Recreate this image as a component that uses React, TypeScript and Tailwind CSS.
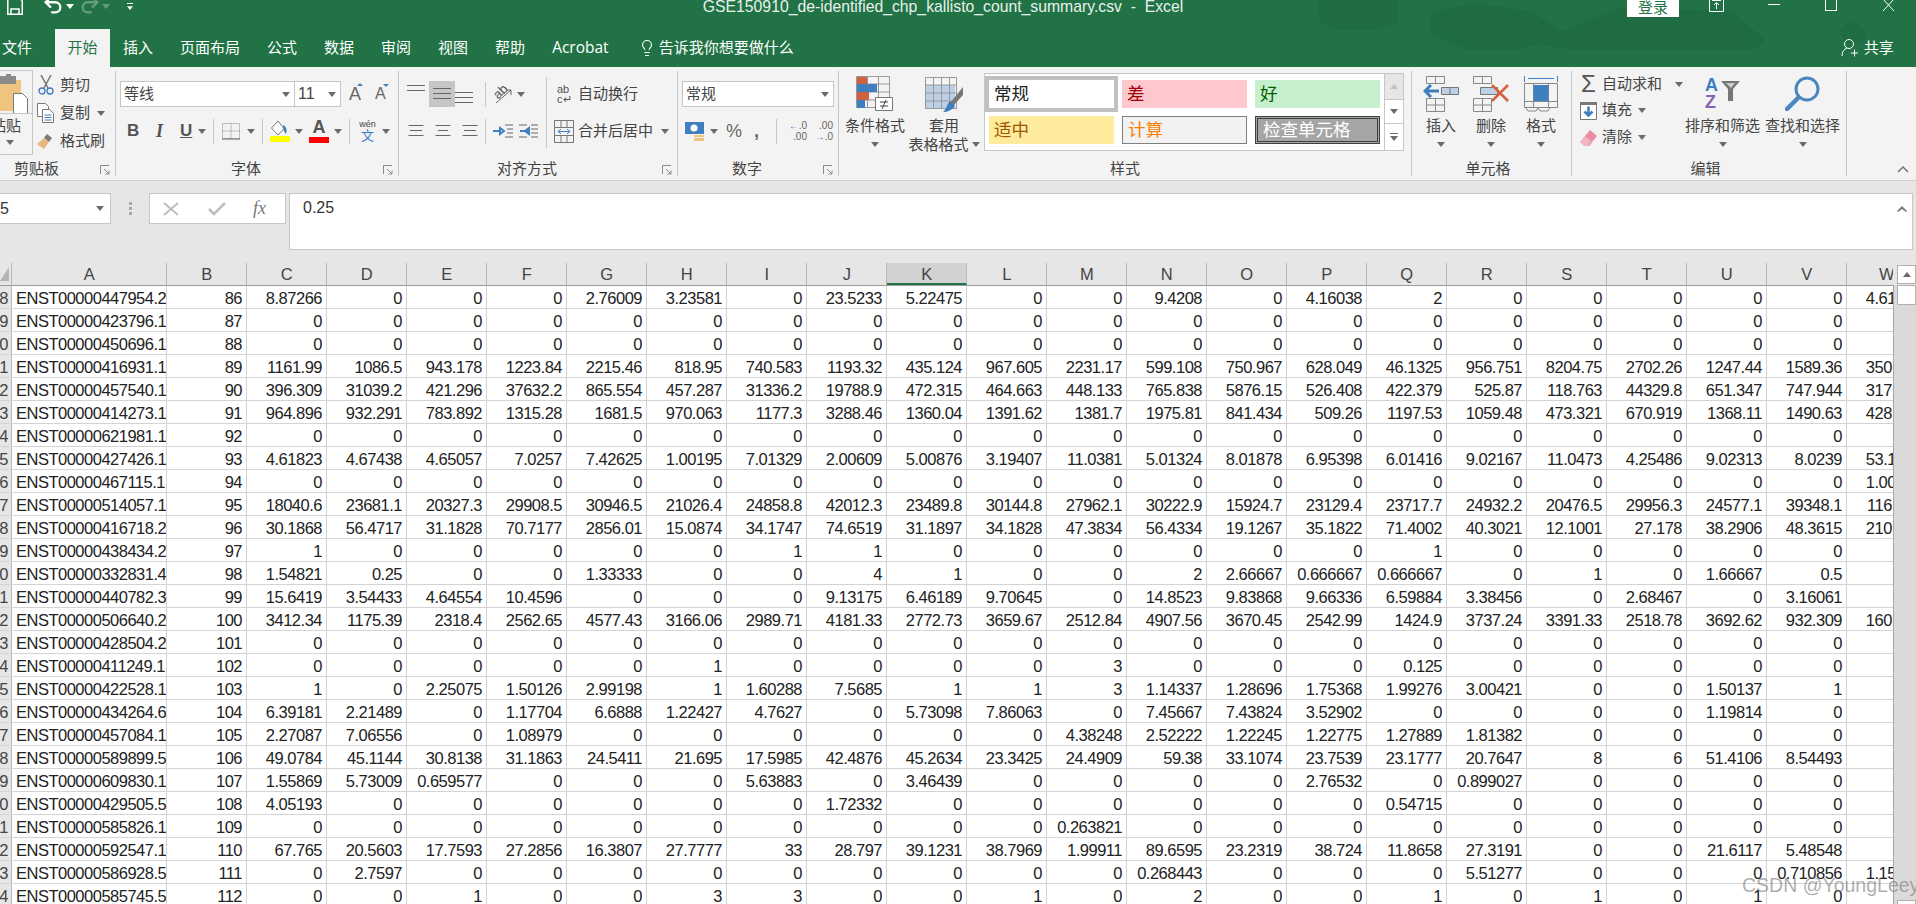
import type { ReactNode } from 'react'
import { Lightbulb, Redo2, Undo2 } from 'lucide-react'

const columns = ['C', 'D', 'E', 'F', 'G', 'H', 'I', 'J', 'K', 'L', 'M', 'N', 'O', 'P', 'Q', 'R', 'S', 'T', 'U', 'V', 'W']

// id, number in B, then C..W. An empty string means the whole row is zero
const sheet: [string, number, string][] = [
  ['ENST00000447954.2', 86, '8.87266 0 0 0 2.76009 3.23581 0 23.5233 5.22475 0 0 9.4208 0 4.16038 2 0 0 0 0 0 4.61823'],
  ['ENST00000423796.1', 87, ''],
  ['ENST00000450696.1', 88, ''],
  ['ENST00000416931.1', 89, '1161.99 1086.5 943.178 1223.84 2215.46 818.95 740.583 1193.32 435.124 967.605 2231.17 599.108 750.967 628.049 46.1325 956.751 8204.75 2702.26 1247.44 1589.36 350.123'],
  ['ENST00000457540.1', 90, '396.309 31039.2 421.296 37632.2 865.554 457.287 31336.2 19788.9 472.315 464.663 448.133 765.838 5876.15 526.408 422.379 525.87 118.763 44329.8 651.347 747.944 317.123'],
  ['ENST00000414273.1', 91, '964.896 932.291 783.892 1315.28 1681.5 970.063 1177.3 3288.46 1360.04 1391.62 1381.7 1975.81 841.434 509.26 1197.53 1059.48 473.321 670.919 1368.11 1490.63 428.123'],
  ['ENST00000621981.1', 92, ''],
  ['ENST00000427426.1', 93, '4.61823 4.67438 4.65057 7.0257 7.42625 1.00195 7.01329 2.00609 5.00876 3.19407 11.0381 5.01324 8.01878 6.95398 6.01416 9.02167 11.0473 4.25486 9.02313 8.0239 53.1234'],
  ['ENST00000467115.1', 94, '0 0 0 0 0 0 0 0 0 0 0 0 0 0 0 0 0 0 0 0 1.00123'],
  ['ENST00000514057.1', 95, '18040.6 23681.1 20327.3 29908.5 30946.5 21026.4 24858.8 42012.3 23489.8 30144.8 27962.1 30222.9 15924.7 23129.4 23717.7 24932.2 20476.5 29956.3 24577.1 39348.1 11612.3'],
  ['ENST00000416718.2', 96, '30.1868 56.4717 31.1828 70.7177 2856.01 15.0874 34.1747 74.6519 31.1897 34.1828 47.3834 56.4334 19.1267 35.1822 71.4002 40.3021 12.1001 27.178 38.2906 48.3615 210.123'],
  ['ENST00000438434.2', 97, '1 0 0 0 0 0 1 1 0 0 0 0 0 0 1 0 0 0 0 0 0'],
  ['ENST00000332831.4', 98, '1.54821 0.25 0 0 1.33333 0 0 4 1 0 0 2 2.66667 0.666667 0.666667 0 1 0 1.66667 0.5 0'],
  ['ENST00000440782.3', 99, '15.6419 3.54433 4.64554 10.4596 0 0 0 9.13175 6.46189 9.70645 0 14.8523 9.83868 9.66336 6.59884 3.38456 0 2.68467 0 3.16061 0'],
  ['ENST00000506640.2', 100, '3412.34 1175.39 2318.4 2562.65 4577.43 3166.06 2989.71 4181.33 2772.73 3659.67 2512.84 4907.56 3670.45 2542.99 1424.9 3737.24 3391.33 2518.78 3692.62 932.309 1601.23'],
  ['ENST00000428504.2', 101, ''],
  ['ENST00000411249.1', 102, '0 0 0 0 0 1 0 0 0 0 3 0 0 0 0.125 0 0 0 0 0 0'],
  ['ENST00000422528.1', 103, '1 0 2.25075 1.50126 2.99198 1 1.60288 7.5685 1 1 3 1.14337 1.28696 1.75368 1.99276 3.00421 0 0 1.50137 1 0'],
  ['ENST00000434264.6', 104, '6.39181 2.21489 0 1.17704 6.6888 1.22427 4.7627 0 5.73098 7.86063 0 7.45667 7.43824 3.52902 0 0 0 0 1.19814 0 0'],
  ['ENST00000457084.1', 105, '2.27087 7.06556 0 1.08979 0 0 0 0 0 0 4.38248 2.52222 1.22245 1.22775 1.27889 1.81382 0 0 0 0 0'],
  ['ENST00000589899.5', 106, '49.0784 45.1144 30.8138 31.1863 24.5411 21.695 17.5985 42.4876 45.2634 23.3425 24.4909 59.38 33.1074 23.7539 23.1777 20.7647 8 6 51.4106 8.54493 0'],
  ['ENST00000609830.1', 107, '1.55869 5.73009 0.659577 0 0 0 5.63883 0 3.46439 0 0 0 0 2.76532 0 0.899027 0 0 0 0 0'],
  ['ENST00000429505.5', 108, '4.05193 0 0 0 0 0 0 1.72332 0 0 0 0 0 0 0.54715 0 0 0 0 0 0'],
  ['ENST00000585826.1', 109, '0 0 0 0 0 0 0 0 0 0 0.263821 0 0 0 0 0 0 0 0 0 0'],
  ['ENST00000592547.1', 110, '67.765 20.5603 17.7593 27.2856 16.3807 27.7777 33 28.797 39.1231 38.7969 1.99911 89.6595 23.2319 38.724 11.8658 27.3191 0 0 21.6117 5.48548 0'],
  ['ENST00000586928.5', 111, '0 2.7597 0 0 0 0 0 0 0 0 0 0.268443 0 0 0 5.51277 0 0 0 0.710856 1.15123'],
  ['ENST00000585745.5', 112, '0 0 1 0 0 3 3 0 0 1 0 2 0 0 1 0 1 0 1 0 0'],
]

function Caret({ className = '' }: { className?: string }) {
  return (
    <svg width="8" height="5" viewBox="0 0 8 5" className={`shrink-0 ${className}`}>
      <path d="M0 0h8L4 5z" fill="#6a6a6a" />
    </svg>
  )
}

function Launcher() {
  return (
    <svg width="10" height="10" viewBox="0 0 10 10" className="absolute right-[5px] bottom-[1px]" fill="none" stroke="#8a8a8a">
      <path d="M.5 9V.5H9M4 4l5 5M9 5.500V9H5.500" />
    </svg>
  )
}

function Group({ width, label, labelPad = '', launcher, children }: { width: string; label: string; labelPad?: string; launcher?: boolean; children: ReactNode }) {
  return (
    <div className={`relative flex shrink-0 flex-col border-r border-[#c6c6c6] ${width}`}>
      <div className="h-[91px]">{children}</div>
      <div className={`h-[14px] text-center text-[15px] leading-[14px] text-[#444] ${labelPad}`}>{label}</div>
      {launcher && <Launcher />}
    </div>
  )
}

function BigButton({ icon, label, width = 'w-[50px]', second }: { icon: ReactNode; label: string; width?: string; second?: string }) {
  return (
    <div className={`flex shrink-0 flex-col items-center text-[15px] leading-[19px] text-[#444] ${width}`}>
      <div className="flex h-[45px] items-center justify-center">{icon}</div>
      <div className="whitespace-nowrap">{label}</div>
      <div className="flex h-[19px] items-center justify-center gap-[3px] whitespace-nowrap">
        {second}
        <Caret />
      </div>
    </div>
  )
}

function Lines({ widths, y = 0 }: { widths: number[]; y?: number }) {
  const size = 18
  return (
    <svg width={size} height="16" viewBox="0 0 18 16" style={{ marginTop: y }} stroke="#666" className="shrink-0">
      {widths.map((w, i) => (
        <path key={i} d={`M${(size - w) / 2} ${2.500 + i * 5}h${w}`} />
      ))}
    </svg>
  )
}

function Sep() {
  return <div className="h-[25px] w-px shrink-0 bg-[#c6c6c6]" />
}

function SmallRow({ icon, label, caret, height, gap = 'gap-[6px]' }: { icon: ReactNode; label: string; caret?: boolean; height: string; gap?: string }) {
  return (
    <div className={`flex items-center ${gap} ${height} text-[15px] text-[#444]`}>
      <div className="flex w-[17px] shrink-0 justify-center">{icon}</div>
      <span className="whitespace-nowrap">{label}</span>
      {caret && <Caret className="ml-[1px]" />}
    </div>
  )
}

function Clipboard() {
  return (
    <div className="flex">
      <div className="-mt-[1px] h-[85px] w-[33px] shrink-0 border border-l-0 border-[#c6c6c6]">
        <div className="relative h-[43px] overflow-hidden border-b border-[#c6c6c6]">
          <svg width="32" height="43" viewBox="0 0 32 43">
            <path d="M0 9h21v31H0z" fill="#efc47f" />
            <path d="M0 5h6V3h5v2h5v8H0z" fill="#8a8a8a" />
            <path d="M13.500 22.500h9l5 5v15h-14z" fill="#fff" stroke="#777" />
          </svg>
        </div>
        <div className="flex h-[41px] flex-col items-center">
          <div className="-ml-[13px] flex h-[24px] w-[23px] items-center justify-end overflow-hidden text-[15px] text-[#444]">
            <span className="shrink-0">粘贴</span>
          </div>
          <Caret className="mt-[2px] -ml-[13px]" />
        </div>
      </div>
      <div className="ml-[4px]">
        <SmallRow
          height="h-[28px]"
          label="剪切"
          icon={
            <svg width="16" height="20" viewBox="0 0 16 20" fill="none">
              <path d="M3 0l7 13M13 0L6 13" stroke="#777" strokeWidth="1.500" />
              <circle cx="4" cy="16" r="3" stroke="#3f7fbf" strokeWidth="1.300" />
              <circle cx="12" cy="16" r="3" stroke="#3f7fbf" strokeWidth="1.300" />
            </svg>
          }
        />
        <SmallRow
          height="h-[28px]"
          label="复制"
          caret
          icon={
            <svg width="17" height="20" viewBox="0 0 17 20" fill="#fff" stroke="#777">
              <path d="M.5.500h8l3 3v10H.5z" />
              <path d="M5.500 6.500h7l4 4v9h-11z" />
              <path d="M7.500 12h7M7.500 14.500h7M7.500 17h7" stroke="#3f7fbf" />
            </svg>
          }
        />
        <SmallRow
          height="h-[28px]"
          label="格式刷"
          icon={
            <svg width="17" height="18" viewBox="0 0 17 18">
              <path d="M10 2l5 4-3 4-5-4z" fill="#7a7a7a" />
              <path d="M7 6l5 4-5 7-7-5z" fill="#e6b980" />
            </svg>
          }
        />
      </div>
    </div>
  )
}

function Font() {
  return (
    <div className="ml-[4px]">
      <div className="mt-[10px] flex h-[26px] items-center">
        <div className="flex h-full w-[175px] items-center justify-between border border-[#c6c6c6] bg-white pr-[4px] pl-[3px] text-[15px] text-[#444]">
          等线
          <Caret />
        </div>
        <div className="-ml-px flex h-full w-[47px] items-center justify-between border border-[#c6c6c6] bg-white pr-[4px] pl-[3px] text-[16px] text-[#444]">
          11
          <Caret />
        </div>
        <div className="relative ml-[8px] w-[13px] text-[18px] leading-none text-[#666]">
          A<span className="absolute -top-[2px] left-[8px] h-0 w-0 border-x-[3px] border-b-[3px] border-x-transparent border-b-[#4a7fb5]" />
        </div>
        <div className="relative ml-[13px] w-[13px] text-[16px] leading-none text-[#666]">
          A<span className="absolute -top-[2px] left-[8px] h-0 w-0 border-x-[3px] border-t-[3px] border-x-transparent border-t-[#4a7fb5]" />
        </div>
      </div>
      <div className="mt-[11px] flex h-[26px] items-center text-[#555]">
        <span className="ml-[7px] w-[12px] text-[17px] font-bold">B</span>
        <span className="ml-[17px] w-[10px] font-['Liberation_Serif'] text-[18px] font-bold italic">I</span>
        <span className="ml-[14px] w-[11px] text-[17px] font-bold underline">U</span>
        <Caret className="mr-[7px] ml-[7px]" />
        <Sep />
        <svg width="18" height="17" viewBox="0 0 18 17" fill="none" className="mr-[7px] ml-[8px] shrink-0">
          <path d="M.5.500h17v15H.5zM9 .5v15M.5 8h17" stroke="#888" strokeDasharray="1 1" />
          <path d="M0 16h18" stroke="#666" />
        </svg>
        <Caret className="mr-[7px]" />
        <Sep />
        <svg width="20" height="22" viewBox="0 0 20 22" className="mr-[5px] ml-[7px] shrink-0">
          <path d="M8 1L1.500 8 8 15l6-6.500z" fill="#fff" stroke="#777" />
          <path d="M13 5c4 2 4 6 3 9-2-2-3-5-3-9z" fill="#3f7fbf" />
          <path d="M0 16h20v6H0z" fill="#ffff00" />
        </svg>
        <Caret className="mr-[6px]" />
        <div className="flex w-[20px] flex-col items-center">
          <span className="text-[18px] leading-[17px] font-bold text-[#555]">A</span>
          <span className="mt-[1px] h-[6px] w-[20px] bg-[#ff0000]" />
        </div>
        <Caret className="mr-[7px] ml-[5px]" />
        <Sep />
        <div className="ml-[9px] flex w-[17px] flex-col items-center text-[#3f7fbf]">
          <span className="text-[9px] leading-[9px] text-[#444]">wén</span>
          <span className="text-[13px] leading-[13px]">文</span>
        </div>
        <Caret className="ml-[6px]" />
      </div>
    </div>
  )
}

function Alignment() {
  return (
    <div className="flex">
      <div className="ml-[8px] w-[70px]">
        <div className="mt-[10px] flex h-[26px]">
          <Lines widths={[18, 18]} y={2} />
          <div className="ml-[4px] flex h-[26px] w-[26px] items-center justify-center bg-[#c6c6c6]">
            <Lines widths={[18, 18, 18]} />
          </div>
          <Lines widths={[18, 18, 18]} y={9} />
        </div>
        <div className="mt-[11px] flex h-[26px] items-center gap-[9px]">
          <Lines widths={[15, 12, 15]} />
          <Lines widths={[15, 10, 15]} />
          <Lines widths={[15, 12, 15]} />
        </div>
      </div>
      <div className="ml-[8px]">
        <div className="mt-[10px] flex h-[26px] items-center">
          <Sep />
          <div className="relative ml-[7px] h-[20px] w-[19px] shrink-0">
            <span className="absolute top-[1px] left-0 inline-block -rotate-45 text-[13px] leading-none text-[#555]">ab</span>
            <svg width="19" height="20" viewBox="0 0 19 20" fill="none" stroke="#666" className="absolute inset-0">
              <path d="M3 19L18 6M18 6h-5M18 6v5" />
            </svg>
          </div>
          <Caret className="ml-[5px]" />
        </div>
        <div className="mt-[11px] flex h-[26px] items-center">
          <Sep />
          <svg width="20" height="16" viewBox="0 0 20 16" fill="none" className="ml-[7px] shrink-0">
            <path d="M0 8h7M7 5v6L11 8z" stroke="#3f7fbf" strokeWidth="2" />
            <path d="M12 2h8M14 6h6M14 10h6M12 14h8" stroke="#666" />
          </svg>
          <svg width="19" height="16" viewBox="0 0 19 16" fill="none" className="ml-[6px] shrink-0">
            <path d="M11 8H2M2 5v6L6 8z" stroke="#3f7fbf" strokeWidth="2" transform="matrix(-1 0 0 1 12 0)" />
            <path d="M0 2h8M0 14h8M12 2h7M12 6h7M12 10h7M12 14h7" stroke="#666" />
          </svg>
        </div>
      </div>
      <div className="mt-[6px] ml-[8px] h-[71px] w-px shrink-0 bg-[#c6c6c6]" />
      <div className="ml-[10px] text-[15px] text-[#444]">
        <div className="mt-[10px] flex h-[26px] items-center">
          <span className="w-[17px] text-[11px] leading-[10px] text-[#555]">ab c↵</span>
          <span className="ml-[4px]">自动换行</span>
        </div>
        <div className="mt-[11px] -ml-[3px] flex h-[26px] items-center">
          <svg width="20" height="23" viewBox="0 0 20 23" fill="none" className="shrink-0">
            <path d="M.5.500h19v22H.5zM.5 7.500h19M.5 15.500h19M7 .5v7M13 .5v7M7 15.500v7M13 15.500v7" stroke="#777" />
            <path d="M4 11.500h12M4 11.500l3-2.500M4 11.500l3 2.500M16 11.500l-3-2.500M16 11.500l-3 2.500" stroke="#3f7fbf" />
          </svg>
          <span className="ml-[4px] whitespace-nowrap">合并后居中</span>
          <Caret className="ml-[8px]" />
        </div>
      </div>
    </div>
  )
}

function NumberGroup() {
  return (
    <div className="ml-[4px]">
      <div className="mt-[10px] flex h-[26px] w-[152px] items-center justify-between border border-[#c6c6c6] bg-white pr-[4px] pl-[3px] text-[15px] text-[#444]">
        常规
        <Caret />
      </div>
      <div className="mt-[11px] flex h-[26px] items-center text-[#666]">
        <svg width="20" height="20" viewBox="0 0 20 20" className="ml-[3px] shrink-0">
          <path d="M0 1h19v12H0z" fill="#3f7fbf" />
          <circle cx="9" cy="7" r="3.500" fill="#fff" />
          <path d="M9 14h10v2H9zM9 17h10v3H9z" fill="#efc47f" />
        </svg>
        <Caret className="ml-[5px]" />
        <span className="ml-[8px] w-[15px] text-[18px]">%</span>
        <span className="ml-[13px] w-[7px] text-[18px] leading-none font-bold">,</span>
        <div className="mr-[9px] ml-[15px]">
          <Sep />
        </div>
        <div className="w-[21px] text-right text-[10px] leading-[11px]">
          <span className="text-[#3f7fbf]">←</span>.0<br />.00
        </div>
        <div className="ml-[5px] w-[21px] text-right text-[10px] leading-[11px]">
          .00<br />
          <span className="text-[#3f7fbf]">→</span>.0
        </div>
      </div>
    </div>
  )
}

function Styles() {
  const cell = 'flex h-[28px] w-[125px] items-center pl-[5px] text-[17.500px]'
  return (
    <div className="flex">
      <BigButton
        width="w-[60px] ml-[6px]"
        label="条件格式"
        icon={
          <svg width="38" height="35" viewBox="0 0 38 35" fill="none">
            <path d="M.5.500h33v31H.5zM11.500.5v31M22.500.5v31M.5 8h33M.5 16h33M.5 24h33" stroke="#999" />
            <path d="M1 1h10v7H1zM1 16h12v8H1z" fill="#d2603f" />
            <path d="M1 8h20v8H1zM1 24h8v8H1z" fill="#3f7fbf" />
            <path d="M19.500 21.500h17v13h-17z" fill="#fff" stroke="#777" />
            <path d="M24 26h8M24 30h8M30 24l-4 9" stroke="#444" />
          </svg>
        }
      />
      <BigButton
        width="w-[60px] ml-[9px]"
        label="套用"
        second="表格格式"
        icon={
          <svg width="38" height="36" viewBox="0 0 38 36" fill="none">
            <path d="M1 9h29v24H1z" fill="#bcd0e8" />
            <path d="M.5 1.500h31v31H.5zM8.500 1.500v31M16.500 1.500v31M24.500 1.500v31M.5 9h31M.5 17h31M.5 25h31" stroke="#999" />
            <path d="M38 11L25 27l3 3L38 19z" fill="#777" />
            <path d="M25 25l5 5c-3 4-7 6-12 6 3-2 4-8 7-11z" fill="#3f7fbf" />
          </svg>
        }
      />
      <div className="mt-[2px] ml-[10px] flex h-[78px] w-[420px] shrink-0 border border-[#c6c6c6] bg-white">
        <div className="grid h-full grid-cols-[125px_125px_125px] content-start gap-x-[8px] gap-y-[8px] pt-[6px] pl-[4px]">
          <div className={`${cell} bg-white text-[#222] outline-[4px] outline-[#c0c0c0]`}>常规</div>
          <div className={`${cell} bg-[#ffc7ce] text-[#9c0006]`}>差</div>
          <div className={`${cell} bg-[#c6efce] text-[#006100]`}>好</div>
          <div className={`${cell} bg-[#ffeb9c] text-[#9c5700]`}>适中</div>
          <div className={`${cell} border border-[#7f7f7f] bg-[#f2f2f2] text-[#fa7d00]`}>计算</div>
          <div className={`${cell} border-[3px] border-double border-[#3f3f3f] bg-[#a5a5a5] text-white`}>检查单元格</div>
        </div>
        <div className="ml-[4px] flex h-full w-[19px] flex-col border-l border-[#c6c6c6]">
          <div className="flex h-[26px] items-center justify-center border-b border-[#c6c6c6] bg-[#e6e6e6]">
            <Caret className="rotate-180 opacity-30" />
          </div>
          <div className="flex h-[24px] items-center justify-center border-b border-[#c6c6c6]">
            <Caret />
          </div>
          <div className="flex flex-1 flex-col items-center justify-center gap-[2px]">
            <span className="h-px w-[8px] bg-[#6a6a6a]" />
            <Caret />
          </div>
        </div>
      </div>
    </div>
  )
}

function Cells() {
  return (
    <div className="ml-[4px] flex">
      <BigButton
        label="插入"
        icon={
          <svg width="36" height="36" viewBox="0 0 36 36" fill="none">
            <path d="M3.500.5h18v7h-18zM12.500.5v7M3.500 22.500h18v13h-18zM12.500 22.500v13M3.500 29h18" stroke="#888" />
            <path d="M18.500 11.500h17v7h-17z" fill="#bcd0e8" stroke="#777" />
            <path d="M27 11.500v7" stroke="#777" />
            <path d="M16 15H3M8 9l-6 6 6 6" stroke="#3f7fbf" strokeWidth="3" />
          </svg>
        }
      />
      <BigButton
        label="删除"
        icon={
          <svg width="36" height="36" viewBox="0 0 36 36" fill="none">
            <path d="M.5.500h18v7H.5zM9.500.5v7M.5 22.500h18v13H.5zM9.500 22.500v13M.5 29h18" stroke="#888" />
            <path d="M7.500 11.500h17v7h-17z" fill="#bcd0e8" stroke="#777" />
            <path d="M19 9l16 16M35 9L19 25" stroke="#d9603f" strokeWidth="2.500" />
          </svg>
        }
      />
      <BigButton
        label="格式"
        icon={
          <svg width="34" height="37" viewBox="0 0 34 37" fill="none">
            <path d="M.5 1v6M33.500 1v6M4 3.500h26" stroke="#3f7fbf" />
            <path d="M.5 8.500h33v24H.5zM9.500 8.500v24M24.500 8.500v24M.5 26.500h33" stroke="#888" />
            <path d="M9.500 10h15v16h-15z" fill="#3f7fbf" />
            <path d="M2 33l2 3h8l2-3M14 33l2 3h8l2-3" stroke="#888" />
          </svg>
        }
      />
    </div>
  )
}

function Editing() {
  return (
    <div className="ml-[8px] flex">
      <div className="w-[105px] shrink-0">
        <div className="flex h-[26px] items-center gap-[5px] text-[15px] text-[#444]">
          <span className="flex w-[17px] justify-center text-[24px] leading-none text-[#555]">Σ</span>
          <span className="whitespace-nowrap">自动求和</span>
          <Caret className="ml-[8px]" />
        </div>
        <SmallRow
          height="h-[27px]"
          gap="gap-[5px]"
          label="填充"
          caret
          icon={
            <svg width="17" height="18" viewBox="0 0 17 18" fill="none">
              <path d="M.5.500h16v17H.5z" stroke="#777" fill="#fff" />
              <path d="M0 0h17v3H0z" fill="#777" />
              <path d="M8.500 4.500v9M4.500 9.500l4 4 4-4" stroke="#3f7fbf" strokeWidth="2.500" />
            </svg>
          }
        />
        <SmallRow
          height="h-[27px]"
          gap="gap-[5px]"
          label="清除"
          caret
          icon={
            <svg width="17" height="16" viewBox="0 0 17 16">
              <path d="M10 0l7 6-8 10H5l-5-4z" fill="#e88ea0" />
              <path d="M0 12l5-6 6 5-3 5H4z" fill="#f2b6c2" />
            </svg>
          }
        />
      </div>
      <BigButton
        width="w-[75px]"
        label="排序和筛选"
        icon={
          <div className="flex items-center">
            <div className="flex flex-col text-[18px] leading-[17px] font-bold">
              <span className="text-[#3f7fbf]">A</span>
              <span className="text-[#8a62b5]">Z</span>
            </div>
            <svg width="19" height="20" viewBox="0 0 19 20" className="-mt-[6px] ml-[3px]">
              <path d="M0 0h19l-7 8v12H7V8z" fill="#777" />
              <path d="M5 2h9l-4 5z" fill="#ccc" />
            </svg>
          </div>
        }
      />
      <BigButton
        width="w-[75px] ml-[5px]"
        label="查找和选择"
        icon={
          <svg width="36" height="35" viewBox="0 0 36 35" fill="none">
            <circle cx="22" cy="13" r="11" stroke="#4a86c0" strokeWidth="3" />
            <path d="M13 22L2 33" stroke="#4a86c0" strokeWidth="4.500" strokeLinecap="round" />
          </svg>
        }
      />
    </div>
  )
}

function Header() {
  const tabs = ['插入', '页面布局', '公式', '数据', '审阅', '视图', '帮助', 'Acrobat']
  return (
    <div className="relative h-[67px] shrink-0 overflow-hidden bg-[#217346] text-white">
      <svg width="1916" height="67" viewBox="0 0 1916 67" className="absolute inset-0">
        <path d="M1319 0h79v22l-25 8h-40l-14-10zM1431 12l40-9 60 8 31 20 60-24 110 4 34 30-14 9h-180l-35-6-20 6h-50l-36-16zM1839 30l14-10 15 12-5 11h-18z" fill="#1f6c43" />
      </svg>
      <div className="relative flex h-[29px] items-start">
        <svg width="16" height="15" viewBox="0 0 16 15" fill="none" stroke="#fff" strokeWidth="1.500" className="ml-[7px] shrink-0">
          <path d="M.8-2h12l2.500 3v13.200H.8zM4 14V9h8v5" />
        </svg>
        <Undo2 size={22} strokeWidth={2.500} className="-mt-[6px] ml-[19px] shrink-0" />
        <Caret className="mt-[4px] ml-[2px] brightness-[4]" />
        <Redo2 size={22} strokeWidth={2.500} className="-mt-[6px] ml-[5px] shrink-0 opacity-30" />
        <Caret className="mt-[4px] ml-[1px] opacity-30 brightness-[4]" />
        <div className="mt-[3px] ml-[17px] flex shrink-0 flex-col items-center gap-[2px]">
          <span className="h-px w-[6px] bg-white" />
          <Caret className="h-[4px] w-[6px] brightness-[4]" />
        </div>
        <div className="-mt-[2px] ml-[567px] w-[486px] shrink-0 text-center text-[15.750px] leading-[18px] whitespace-nowrap text-[#e8f1ec]">
          GSE150910_de-identified_chp_kallisto_count_summary.csv&nbsp; -&nbsp; Excel
        </div>
        <div className="ml-[441px] flex h-[17px] w-[52px] shrink-0 items-center justify-center bg-white text-[15px] text-[#217346]">登录</div>
        <svg width="15" height="12" viewBox="0 0 15 12" fill="none" stroke="#fff" className="ml-[30px] shrink-0">
          <path d="M.5-1v12.500h14V-1M7.500 9V3M5 5l2.500-2.500L10 5M3 .5h9" />
        </svg>
        <span className="mt-[4px] ml-[44px] h-px w-[12px] shrink-0 bg-white" />
        <span className="ml-[45px] h-[11px] w-[12px] shrink-0 border border-t-0 border-white" />
        <svg width="13" height="11" viewBox="0 0 13 11" fill="none" stroke="#fff" className="ml-[45px] shrink-0">
          <path d="M1 -1l11 12M12 -1L1 11" />
        </svg>
      </div>
      <div className="relative flex h-[38px] items-center gap-[27px] text-[15px] whitespace-nowrap">
        <span className="ml-[2px]">文件</span>
        <div className="-mr-[14px] -ml-[4px] flex h-full w-[55px] items-center justify-center bg-[#f3f3f3] text-[#217346]">开始</div>
        {tabs.map(t => (
          <span key={t} className={t === 'Acrobat' ? "font-['Open_Sans'] text-[15.500px]" : ''}>
            {t}
          </span>
        ))}
        <div className="ml-[3px] flex items-center gap-[3px]">
          <Lightbulb size={18} strokeWidth={1.500} className="-ml-[1px]" />
          <span>告诉我你想要做什么</span>
        </div>
        <svg width="17" height="18" viewBox="0 0 17 18" fill="none" stroke="#fff" className="ml-[1020px] shrink-0">
          <circle cx="8" cy="5" r="4.500" />
          <path d="M1 17c0-4 2-7 5-8M10 14h7M13.500 10.500v7" />
        </svg>
        <span className="-ml-[21px]">共享</span>
      </div>
    </div>
  )
}

function FormulaBar() {
  return (
    <div className="flex h-[82px] shrink-0 items-start bg-[#e6e6e6] pt-[12px]">
      <div className="flex h-[31px] w-[111px] shrink-0 items-center border border-l-0 border-[#c6c6c6] bg-white">
        <div className="flex w-[9px] shrink-0 justify-end overflow-hidden text-[16px] text-[#333]">
          <span className="shrink-0">K25</span>
        </div>
        <Caret className="ml-[87px]" />
      </div>
      <div className="mt-[9px] ml-[18px] flex w-[3px] shrink-0 flex-col gap-[2px]">
        <span className="h-[3px] bg-[#a8a8a8]" />
        <span className="h-[3px] bg-[#a8a8a8]" />
        <span className="h-[3px] bg-[#a8a8a8]" />
      </div>
      <div className="ml-[17px] flex h-[31px] w-[137px] shrink-0 items-center border border-[#c6c6c6] bg-white">
        <svg width="16" height="14" viewBox="0 0 16 14" fill="none" stroke="#bdbdbd" strokeWidth="2" className="ml-[13px] shrink-0">
          <path d="M1 1l14 12M15 1L1 13" />
        </svg>
        <svg width="18" height="14" viewBox="0 0 18 14" fill="none" stroke="#bdbdbd" strokeWidth="2.500" className="ml-[29px] shrink-0">
          <path d="M1 7l5 5L17 1" />
        </svg>
        <span className="ml-[27px] font-['Liberation_Serif'] text-[18px] text-[#777] italic">fx</span>
      </div>
      <div className="relative ml-[3px] flex h-[57px] flex-1 items-start border border-[#c6c6c6] bg-white pt-[2px] pl-[13px] text-[16px] text-[#333]">
        0.25
        <svg width="10" height="6" viewBox="0 0 10 6" className="absolute top-[12px] right-[5px]">
          <path d="M5 0l5 5-1 1-4-3-4 3-1-1z" fill="#777" />
        </svg>
      </div>
      <div className="w-[3px] shrink-0" />
    </div>
  )
}

function Grid() {
  return (
    <div className="flex min-h-0 flex-1">
      <div className="w-[1893px] shrink-0 overflow-hidden bg-white text-[16.500px] tracking-[-0.5px] text-[#222]">
        <div className="flex h-[23px] border-b border-[#9b9b9b] bg-[#e6e6e6] text-[#444]">
          <div className="flex w-[12px] shrink-0 items-end border-r border-[#b8b8b8] pb-[3px]">
            <svg width="10" height="15" viewBox="0 0 10 15">
              <path d="M9 0v14H0z" fill="#b5b5b5" />
            </svg>
          </div>
          <div className="flex w-[155px] shrink-0 justify-center border-r border-[#b8b8b8] leading-[22px]">A</div>
          <div className="flex w-[80px] shrink-0 justify-center border-r border-[#b8b8b8] leading-[22px]">B</div>
          {columns.map(c => (
            <div
              key={c}
              className={`flex w-[80px] shrink-0 justify-center border-r border-[#b8b8b8] leading-[22px] ${
                c === 'K' ? 'border-b-2 border-b-[#217346] bg-[#d2d2d2]' : ''
              }`}
            >
              {c}
            </div>
          ))}
        </div>
        {sheet.map(([id, num, vals]) => {
          const cells = vals ? vals.split(' ') : columns.map(() => '0')
          return (
            <div key={id} className="flex h-[23px] border-b border-[#d4d4d4] leading-[24px]">
              <div className="flex w-[12px] shrink-0 justify-end overflow-hidden border-r border-[#b8b8b8] bg-[#e6e6e6] pr-[3px] text-[#444]">
                <span className="shrink-0">{num + 2}</span>
              </div>
              <div className="w-[155px] shrink-0 overflow-hidden border-r border-[#d4d4d4] pl-[4px] whitespace-nowrap">{id}</div>
              <div className="w-[80px] shrink-0 border-r border-[#d4d4d4] pr-[4px] text-right">{num}</div>
              {cells.map((v, i) => (
                <div key={i} className="w-[80px] shrink-0 border-r border-[#d4d4d4] pr-[4px] text-right">
                  {v}
                </div>
              ))}
            </div>
          )
        })}
      </div>
      <div className="flex w-[23px] shrink-0 flex-col">
        <div className="h-[22px] shrink-0 bg-[#e6e6e6] pt-[2px] pl-[4px]">
          <div className="flex h-[19px] w-[19px] items-center justify-center border border-[#b0b0b0] bg-white">
            <Caret className="rotate-180" />
          </div>
        </div>
        <div className="flex-1 border-l border-[#a6a6a6] bg-[#dadada] pl-[3px]">
          <div className="h-[20px] border border-[#b0b0b0] bg-white" />
          <div className="mt-[595px] h-[10px] border border-[#b0b0b0] bg-white" />
        </div>
      </div>
    </div>
  )
}

export default function App() {
  return (
    <div className="relative flex h-[904px] w-[1916px] flex-col overflow-hidden bg-[#e6e6e6] font-['Liberation_Sans','Noto_Sans_CJK_SC',sans-serif]">
      <Header />
      <div className="flex h-[114px] shrink-0 items-start border-b border-[#d0d0d0] bg-[#f3f3f3] pt-[4px]">
        <Group width="w-[116px]" label="剪贴板" labelPad="pr-[42px]" launcher>
          <Clipboard />
        </Group>
        <Group width="w-[283px]" label="字体" labelPad="pr-[22px]" launcher>
          <Font />
        </Group>
        <Group width="w-[279px]" label="对齐方式" labelPad="pr-[22px]" launcher>
          <Alignment />
        </Group>
        <Group width="w-[161px]" label="数字" labelPad="pr-[22px]" launcher>
          <NumberGroup />
        </Group>
        <Group width="w-[573px]" label="样式">
          <Styles />
        </Group>
        <Group width="w-[160px]" label="单元格" labelPad="pr-[7px]">
          <Cells />
        </Group>
        <Group width="w-[275px]" label="编辑" labelPad="pr-[7px]">
          <Editing />
        </Group>
        <svg width="12" height="7" viewBox="0 0 12 7" fill="none" stroke="#777" strokeWidth="1.500" className="mt-[95px] ml-[50px] shrink-0">
          <path d="M1 6l5-5 5 5" />
        </svg>
      </div>
      <FormulaBar />
      <Grid />
      <div className="absolute top-[874px] left-[1742px] text-[19.500px] leading-[22px] whitespace-nowrap text-[#777]/60">CSDN @YoungLeeyou</div>
    </div>
  )
}
